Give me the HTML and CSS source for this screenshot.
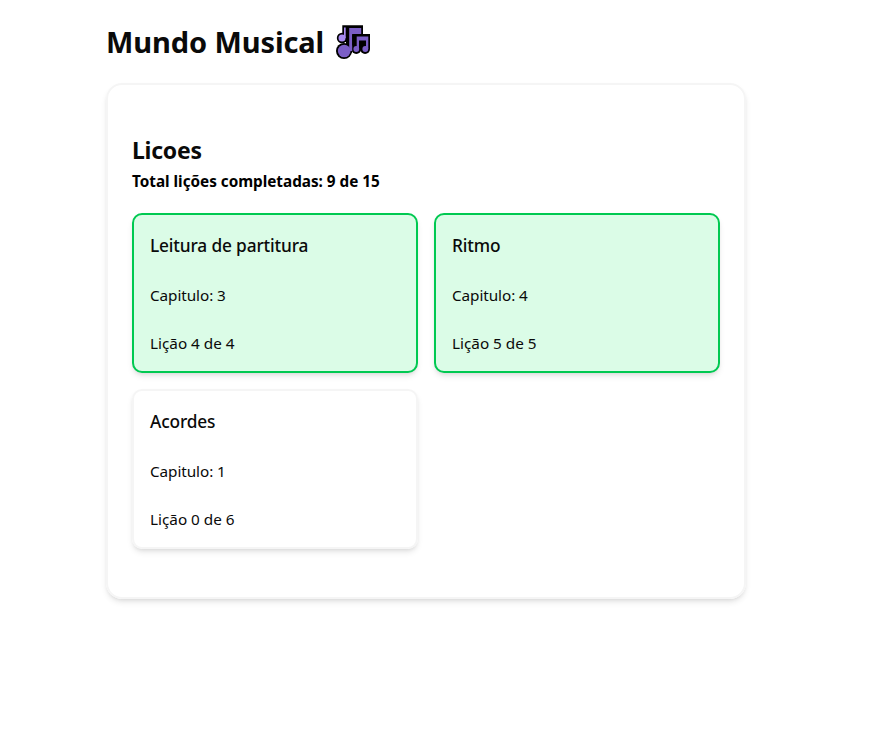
FILE: index.html
```html
<!DOCTYPE html>
<html lang="pt-BR">
<head>
<meta charset="utf-8">
<title>Mundo Musical</title>
<link rel="stylesheet" href="styles.css">
</head>
<body>
<main class="page">
  <header class="header">
    <h1 class="title">Mundo Musical</h1>
    <svg class="logo" viewBox="0 0 36 36" aria-hidden="true">
      <g fill="#000">
        <path d="M7.3 1.3H28V10h7v15H17v4h-6V18H7.3z"/>
        <circle cx="7" cy="14" r="5.2"/>
        <circle cx="9" cy="27" r="8"/>
        <circle cx="21.3" cy="25" r="4.9"/>
        <circle cx="30.1" cy="25" r="4.9"/>
      </g>
      <g fill="#a78bf0">
        <circle cx="7" cy="14" r="3.5"/>
        <path d="M9 3.5h1.7V14H9z"/>
      </g>
      <g fill="#7b5ec6">
        <path d="M14.2 4h12v6h-9v17h-3z"/>
        <circle cx="9.2" cy="27" r="6.3"/>
        <path d="M21.7 12.5h11.6V25H31v-8.5h-7V25h-2.3z"/>
        <circle cx="21.3" cy="25" r="2.9"/>
        <circle cx="30.3" cy="25" r="2.9"/>
      </g>
      <path fill="#000" d="M17.2 10.5h3.5v11h-3.5z"/>
    </svg>
  </header>
  <section class="panel">
    <h2 class="panel-title">Licoes</h2>
    <p class="total">Total lições completadas: 9 de 15</p>
    <div class="grid">
      <article class="card done"><h3>Leitura de partitura</h3><p>Capitulo: 3</p><p class="lesson">Lição 4 de 4</p></article>
      <article class="card done"><h3>Ritmo</h3><p>Capitulo: 4</p><p class="lesson">Lição 5 de 5</p></article>
      <article class="card"><h3>Acordes</h3><p>Capitulo: 1</p><p class="lesson">Lição 0 de 6</p></article>
    </div>
  </section>
</main>
</body>
</html>
```
FILE: styles.css
```css
* { box-sizing: border-box; margin: 0; padding: 0; }
body { min-height: 100vh; background: #fff; color: #0a0a0a; font-family: "Segoe UI", "Noto Sans", sans-serif; font-size: 15.3px; line-height: 24px; }
.page { width: 640px; margin-left: 106px; padding-top: 24px; }
.header { display: flex; align-items: center; gap: 11px; height: 36px; margin-bottom: 23px; }
.title { width: 218px; font-size: 29px; line-height: 36px; padding-bottom: 1px; font-weight: 700; letter-spacing: -.1px; white-space: nowrap; }
.logo { width: 36px; height: 36px; }
.panel { height: 516px; padding: 49px 24px 47px; border: 2px solid #f5f5f5; border-radius: 16px; box-shadow: 0 4px 6px -1px rgb(0 0 0 / .1), 0 2px 4px -2px rgb(0 0 0 / .1); }
.panel-title { font-size: 23px; line-height: 32px; font-weight: 700; letter-spacing: -.25px; }
.total { color: #000; font-size: 15.3px; font-weight: 700; letter-spacing: -.02px; margin-top: 3px; }
.grid { display: grid; grid-template-columns: 1fr 1fr; gap: 16px; margin-top: 20px; }
.card { height: 160px; padding: 17px 16px 15px; border: 2px solid #f5f5f5; border-radius: 10px; box-shadow: 0 4px 6px -1px rgb(0 0 0 / .1), 0 2px 4px -2px rgb(0 0 0 / .1); }
.card h3 { font-size: 17.3px; line-height: 28px; font-weight: 500; letter-spacing: -.15px; }
.card p { margin-top: 23px; letter-spacing: -.08px; }
.card .lesson { margin-top: 24px; letter-spacing: 0; }
.done { background: #dbfce7; border-color: #00c951; }
```
